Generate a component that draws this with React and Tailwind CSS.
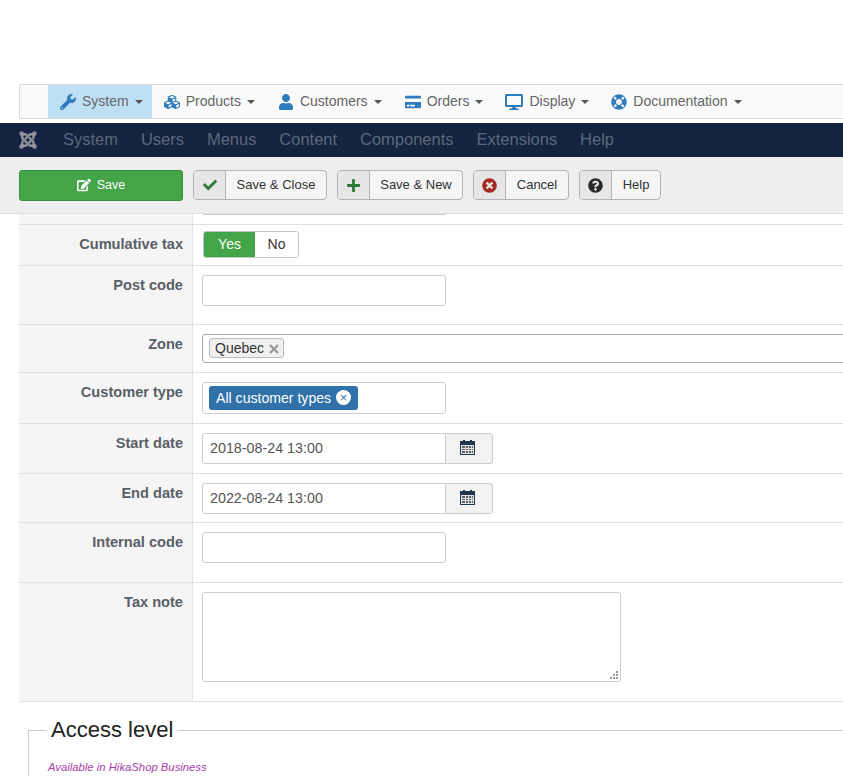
import { FaWrench, FaCubes, FaUser, FaCreditCard, FaDesktop, FaLifeRing, FaJoomla, FaEdit, FaCheck, FaPlus, FaTimesCircle, FaQuestionCircle } from 'react-icons/fa';

const menuItems = [
  { label: 'System', icon: FaWrench, active: true, itemClass: 'pr-[9px]', iconClass: 'text-[16px]' },
  { label: 'Products', icon: FaCubes, itemClass: 'pr-[11px]', iconClass: 'text-[16px]' },
  { label: 'Customers', icon: FaUser, itemClass: 'pr-[11px]', iconClass: 'text-[16px]' },
  { label: 'Orders', icon: FaCreditCard, itemClass: 'pr-[10px]', iconClass: 'text-[16px]' },
  { label: 'Display', icon: FaDesktop, itemClass: 'pr-[10px]', iconClass: 'text-[18px]' },
  { label: 'Documentation', icon: FaLifeRing, itemClass: 'pr-[10px]', iconClass: 'text-[16px]' },
];

const adminItems = ['System', 'Users', 'Menus', 'Content', 'Components', 'Extensions', 'Help'];

const Caret = () => (
  <span className="mt-[1px] w-0 h-0 border-x-[4px] border-x-transparent border-t-[4px] border-t-[#555]" />
);

const CalendarIcon = () => (
  <svg width="15" height="15" viewBox="0 0 15 15" shapeRendering="crispEdges">
    <rect x="0" y="1" width="15" height="14" fill="#23364f" />
    <rect x="3" y="0" width="2" height="2" fill="#23364f" />
    <rect x="10" y="0" width="2" height="2" fill="#23364f" />
    <rect x="1" y="5" width="13" height="9" fill="#e4e4e4" />
    <path d="M2 6h11v2H2zM2 9h11v1H2zM2 11h11v2H2z" fill="#5b5f66" />
    <path d="M5 6h1v7H5zM8 6h1v7H8zM11 6h1v7h-1z" fill="#dcdcdc" />
  </svg>
);

const ToolButton = ({ icon: Icon, iconClass, label, width }) => (
  <button className={`flex h-[30px] rounded-[4px] border border-[#b3b3b3] bg-[#f5f5f5] text-[#333] text-[13px] overflow-hidden ${width}`}>
    <span className="w-[32px] h-full shrink-0 flex items-center justify-center bg-[#e6e6e6] border-r border-[#b3b3b3]">
      <Icon className={iconClass} />
    </span>
    <span className="flex-1 h-full flex items-center justify-center">{label}</span>
  </button>
);

const Row = ({ label, height, children }) => (
  <div className={`flex border-b border-[#e0e0e0] ${height}`}>
    <div className="w-[174px] shrink-0 bg-[#f5f5f5] border-r border-[#e3e3e3] pr-[9px] pt-[10px] text-right text-[14.6px] leading-[18px] font-bold text-[#5a5f68]">
      {label}
    </div>
    <div className="flex-1 min-w-0 overflow-hidden pl-[9px] pt-[9px]">{children}</div>
  </div>
);

const TextBox = ({ height = 'h-[31px]' }) => (
  <div className={`w-[244px] ${height} bg-white border border-[#ccc] rounded-[3px]`} />
);

const DateField = ({ value }) => (
  <div className="flex w-[291px] h-[31px]">
    <div className="w-[244px] border border-[#ccc] rounded-l-[3px] bg-white pl-[7px] flex items-center text-[14.3px] text-[#555]">{value}</div>
    <div className="flex-1 -ml-px border border-[#ccc] rounded-r-[3px] bg-[#f2f2f2] flex items-center justify-center pb-[2px] pr-[4px]">
      <CalendarIcon />
    </div>
  </div>
);

export default function App() {
  return (
    <div className="h-[776px] w-[843px] overflow-hidden bg-white font-['Liberation_Sans',Arial,sans-serif]">
      {/* Top menu */}
      <div className="pt-[84px] pl-[19px]">
        <nav className="flex h-[35px] w-[900px] items-stretch border border-[#d8d8d8] bg-[#fafafa] pl-[28px] text-[14px] text-[#666]">
          {menuItems.map(({ label, icon: Icon, active, itemClass, iconClass }) => (
            <a key={label} className={`flex items-center gap-[6px] pl-[12px] ${itemClass} ${active ? 'bg-[#bee0f4]' : ''}`}>
              <Icon className={`text-[#2f7bbd] ${iconClass}`} />
              <span>{label}</span>
              <Caret />
            </a>
          ))}
        </nav>
      </div>

      {/* Admin bar */}
      <div className="mt-[4px] flex h-[34px] items-center bg-[#132340] pb-[2px] text-[16.5px] text-[#5e6878]">
        <FaJoomla className="ml-[18px] mr-[25px] mt-[2px] text-[20px] text-[#8d929b]" />
        <div className="flex gap-[22.9px]">
          {adminItems.map((item) => (
            <span key={item}>{item}</span>
          ))}
        </div>
      </div>

      {/* Toolbar */}
      <div className="flex h-[57px] items-center gap-[10px] bg-[#eeeeee] pl-[19px] border-b border-[#e0e0e0]">
        <button className="flex h-[31px] w-[164px] items-center justify-center gap-[6px] rounded-[3px] border border-[#3a8f3e] bg-[#43a547] text-[12.5px] text-white">
          <FaEdit className="text-[14px]" />
          Save
        </button>
        <ToolButton icon={FaCheck} iconClass="text-[#2d7a36] text-[14px]" label="Save & Close" width="w-[134px]" />
        <ToolButton icon={FaPlus} iconClass="text-[#2d7a36] text-[15px]" label="Save & New" width="w-[126px]" />
        <ToolButton icon={FaTimesCircle} iconClass="text-[#a32a22] text-[15px]" label="Cancel" width="w-[96px]" />
        <ToolButton icon={FaQuestionCircle} iconClass="text-[#2a2a2a] text-[15px]" label="Help" width="w-[82px]" />
      </div>

      {/* Form */}
      <div className="pl-[19px]">
        <div className="flex h-[11px] border-b border-[#e0e0e0]">
          <div className="w-[174px] shrink-0 bg-[#f5f5f5] border-r border-[#e3e3e3]" />
          <div className="pl-[10px]">
            <div className="h-px w-[243px] bg-[#ccc]" />
          </div>
        </div>
        <Row label="Cumulative tax" height="h-[41px]">
          <div className="-mt-[3px] ml-[1px] flex h-[27px] w-[96px] overflow-hidden rounded-[3px] border border-[#c4c4c4] text-[14px]">
            <span className="flex w-[51px] items-center justify-center bg-[#43a547] text-white">Yes</span>
            <span className="flex flex-1 items-center justify-center bg-white text-[#333]">No</span>
          </div>
        </Row>
        <Row label="Post code" height="h-[59px]">
          <TextBox />
        </Row>
        <Row label="Zone" height="h-[48px]">
          <div className="h-[29px] w-[700px] border border-[#aaa] rounded-l-[3px] bg-white pl-[6px] pt-[3px]">
            <span className="flex w-fit h-[20px] items-center gap-[5px] rounded-[3px] border border-[#bbb] bg-[#f0f0f0] pl-[5px] pr-[4px] text-[14px] text-[#333]">
              Quebec
              <svg width="10" height="10" viewBox="0 0 10 10" className="mt-[2px]">
                <path d="M1 1l8 8M9 1l-8 8" stroke="#999" strokeWidth="2.4" />
              </svg>
            </span>
          </div>
        </Row>
        <Row label="Customer type" height="h-[51px]">
          <div className="h-[32px] w-[244px] border border-[#ccc] rounded-[3px] bg-white pl-[6px] pt-[3px]">
            <span className="flex w-fit h-[24px] items-center gap-[5px] rounded-[3px] bg-[#3071a9] pl-[7px] pr-[7px] pt-[1px] text-[14.1px] text-white">
              All customer types
              <span className="flex h-[15px] w-[15px] -mt-[2px] items-center justify-center rounded-full bg-white text-[13px] leading-none text-[#3071a9]">×</span>
            </span>
          </div>
        </Row>
        <Row label="Start date" height="h-[50px]">
          <DateField value="2018-08-24 13:00" />
        </Row>
        <Row label="End date" height="h-[49px]">
          <DateField value="2022-08-24 13:00" />
        </Row>
        <Row label="Internal code" height="h-[60px]">
          <TextBox />
        </Row>
        <Row label="Tax note" height="h-[119px]">
          <div className="relative h-[90px] w-[419px] rounded-[3px] border border-[#ccc] bg-white">
            <svg className="absolute bottom-[1px] right-[1px]" width="10" height="10" viewBox="0 0 10 10" fill="#999">
              <path d="M7 1h2v2H7zM4 4h2v2H4zM7 4h2v2H7zM1 7h2v2H1zM4 7h2v2H4zM7 7h2v2H7z" />
            </svg>
          </div>
        </Row>
      </div>

      {/* Access level */}
      <fieldset className="ml-[28px] mt-[16px] border-t border-l border-[#ccc] pl-[18px]">
        <legend className="px-[4px] text-[22px] leading-[24px] text-[#222]">Access level</legend>
        <div className="ml-[1px] mt-[17px] text-[11.3px] italic text-[#a83ea8]">Available in HikaShop Business</div>
      </fieldset>
    </div>
  );
}
